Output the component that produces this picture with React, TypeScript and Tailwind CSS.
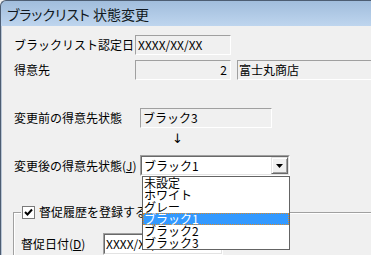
import React from "react";

const sunkenRO =
  "border border-t-[#a0a0a0] border-l-[#a0a0a0] border-b-white border-r-white bg-[#f0f0f0]";

export default function App() {
  const items = ["未設定", "ホワイト", "グレー", "ブラック1", "ブラック2", "ブラック3"];
  return (
    <div className="relative w-[371px] h-[255px] overflow-hidden bg-[#f0f0f0] text-[12px] text-black font-['Noto_Sans_CJK_JP',sans-serif]">
      {/* title bar */}
      <div className="h-[26px] rounded-tl-[6px] border-t border-l border-[#4d5d72] bg-gradient-to-b from-[#a1bddc] to-[#bed5ee] flex items-center pl-[6px] text-[14px] leading-none [font-feature-settings:'palt'] text-[#101820]">
        ブラックリスト 状態変更
      </div>
      <div className="flex h-[229px]">
        <div className="w-[4px] border-l border-[#4d5d72] bg-[#bcd3ec]" />
        <div className="flex-1 border-l border-[#b9c6d6] pl-[12px] pt-[9px] flex flex-col">
          {/* row 1 */}
          <div className="flex items-center h-[20px]">
            <div className="w-[121px] leading-[14px]">ブラックリスト認定日</div>
            <div className={`w-[96px] h-[20px] ${sunkenRO} pl-[2px] leading-[18px]`}>XXXX/XX/XX</div>
          </div>
          {/* row 2 */}
          <div className="flex items-center h-[20px] mt-[5px]">
            <div className="w-[121px] leading-[14px]">得意先</div>
            <div className={`w-[96px] h-[20px] ${sunkenRO} pr-[3px] text-right leading-[18px]`}>2</div>
            <div className={`ml-[6px] w-[160px] h-[20px] ${sunkenRO} pl-[1px] leading-[18px] shrink-0`}>富士丸商店</div>
          </div>
          {/* row 3 */}
          <div className="flex items-center h-[20px] mt-[28px]">
            <div className="w-[126px] leading-[14px]">変更前の得意先状態</div>
            <div className={`w-[132px] h-[20px] ${sunkenRO} pl-[2px] leading-[18px]`}>ブラック3</div>
          </div>
          {/* arrow */}
          <div className="h-[27px]">
            <div className="ml-[158px] mt-[5px] leading-[12px] text-[13px] text-black font-['DejaVu_Sans',sans-serif]">↓</div>
          </div>
          {/* row 4 */}
          <div className="flex items-center h-[21px]">
            <div className="w-[126px] leading-[14px]">
              変更後の得意先状態(<span className="underline">J</span>)
            </div>
            <div className="relative w-[150px] h-[21px] border border-t-[#a0a0a0] border-l-[#a0a0a0] border-b-white border-r-white">
              <div className="h-full flex border border-t-[#696969] border-l-[#696969] border-b-[#e3e3e3] border-r-[#e3e3e3] bg-white">
                <div className="flex-1 pl-[2px] leading-[17px]">ブラック1</div>
                <div className="w-[17px] h-[17px] border border-t-[#e3e3e3] border-l-[#e3e3e3] border-b-[#696969] border-r-[#696969] bg-[#f0f0f0] flex items-center justify-center shadow-[inset_1px_1px_0_#fff,inset_-1px_-1px_0_#a0a0a0]">
                  <svg width="7" height="4" viewBox="0 0 7 4">
                    <path d="M0 0H7L3.5 4Z" fill="#000" />
                  </svg>
                </div>
              </div>
              {/* dropdown list */}
              <div className="absolute left-[1px] top-[20px] w-[148px] h-[74px] border border-[#646464] bg-white z-10">
                {items.map((t, i) =>
                  i === 3 ? (
                    <div
                      key={t}
                      className="h-[12px] leading-[10px] bg-[#3399ff] text-white border border-dotted border-[#d98a2b]"
                    >
                      {t}
                    </div>
                  ) : (
                    <div key={t} className="h-[12px] leading-[12px] pl-[1px]">
                      {t}
                    </div>
                  )
                )}
              </div>
            </div>
          </div>
          {/* group box */}
          <fieldset className="mt-[29px] ml-[-1px] flex-1 border-l border-t border-[#a0a0a0] shadow-[inset_1px_1px_0_#fff] pl-[7px]">
            <legend className="px-[1px] h-[14px] bg-[#f0f0f0]">
              <div className="flex items-center h-[14px]">
                <div className="w-[13px] h-[13px] border border-[#7a7a7a] bg-white flex items-center justify-center">
                  <svg width="9" height="9" viewBox="0 0 9 9">
                    <path d="M1 4 L3.5 6.5 L8 1.5" stroke="#000" strokeWidth="2" fill="none" />
                  </svg>
                </div>
                <span className="ml-[4px] leading-[14px]">督促履歴を登録する</span>
              </div>
            </legend>
            <div className="flex items-center h-[22px] mt-[14px]">
              <div className="w-[82px] leading-[14px]">
                督促日付(<span className="underline">D</span>)
              </div>
              <div className="w-[120px] h-[22px] border border-t-[#a0a0a0] border-l-[#a0a0a0] border-b-white border-r-white">
                <div className="h-full border border-t-[#696969] border-l-[#696969] border-b-[#e3e3e3] border-r-[#e3e3e3] bg-white pl-[1px] leading-[18px]">
                  XXXX/XX/XX
                </div>
              </div>
            </div>
          </fieldset>
        </div>
      </div>
    </div>
  );
}
